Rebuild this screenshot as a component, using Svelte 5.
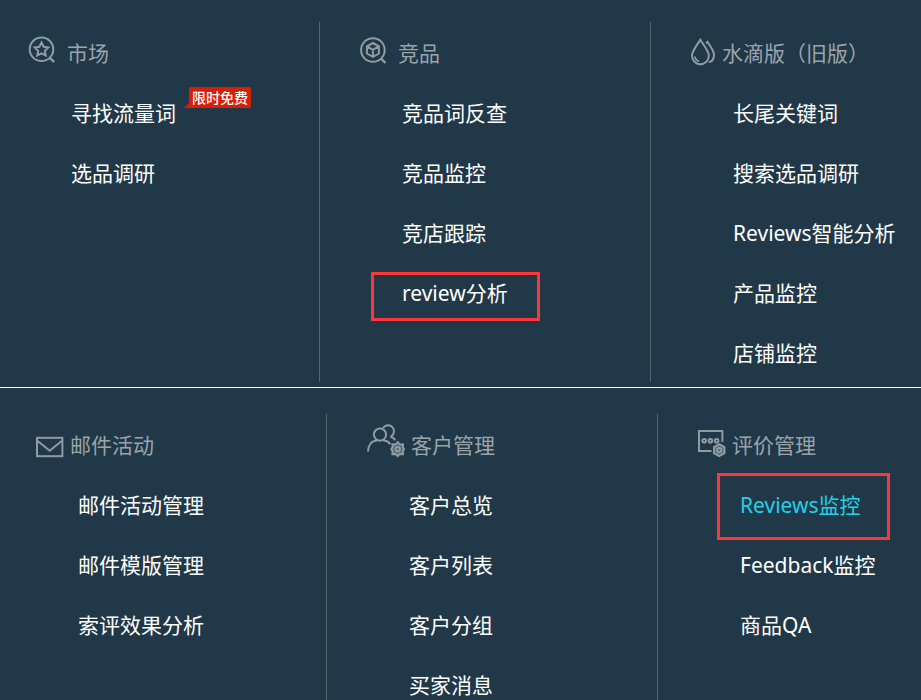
<script>
    let activeItem = $state("Reviews监控")

    const topMenu = [
        {
            title: "市场",
            icon: "market",
            iconWidth: 33,
            items: [{ name: "寻找流量词", badge: "限时免费" }, { name: "选品调研" }]
        },
        {
            title: "竞品",
            icon: "product",
            iconWidth: 33,
            items: [
                { name: "竞品词反查" },
                { name: "竞品监控" },
                { name: "竞店跟踪" },
                { name: "review分析", frame: "small" }
            ]
        },
        {
            title: "水滴版（旧版）",
            icon: "drop",
            iconWidth: 26,
            items: [
                { name: "长尾关键词" },
                { name: "搜索选品调研" },
                { name: "Reviews智能分析" },
                { name: "产品监控" },
                { name: "店铺监控" }
            ]
        }
    ]

    const bottomMenu = [
        {
            title: "邮件活动",
            icon: "mail",
            iconWidth: 29,
            items: [{ name: "邮件活动管理" }, { name: "邮件模版管理" }, { name: "索评效果分析" }]
        },
        {
            title: "客户管理",
            icon: "users",
            iconWidth: 39,
            items: [{ name: "客户总览" }, { name: "客户列表" }, { name: "客户分组" }, { name: "买家消息" }]
        },
        {
            title: "评价管理",
            icon: "comment",
            iconWidth: 29,
            items: [{ name: "Reviews监控", frame: "large" }, { name: "Feedback监控" }, { name: "商品QA" }]
        }
    ]

    function select(event, name) {
        event.preventDefault()
        activeItem = name
    }
</script>

{#snippet icon(name, width)}
    <svg {width} height="60" viewBox="0 0 {width} 60" aria-hidden="true">
        {#if name === "market"}
            <circle cx="13.5" cy="27.3" r="11.8" />
            <path d="M21.7 35.8 L26.2 40" stroke-width="2.4" />
            <path d="M13.5 20.5l2.1 4.3 4.7.7-3.4 3.3.8 4.7-4.2-2.2-4.2 2.2.8-4.7-3.4-3.3 4.7-.7z" />
        {:else if name === "product"}
            <circle cx="13.9" cy="28" r="11.8" />
            <path d="M22.2 36.8 L26.5 40.8" stroke-width="2.4" />
            <path d="M13.9 21l6 3.3v7.2l-6 3.4-6-3.4v-7.2zM7.9 24.3l6 3.5 6-3.5M13.9 27.8v7" />
        {:else if name === "drop"}
            <path d="M10.3 17.8C7.5 22.8 2 28.5 2 33.8a8.4 8.4 0 0 0 16.8 0C18.8 28.5 13 22.8 10.3 17.8z" />
            <path d="M16 21.4l1.5-1.6c2.4 4.2 6.5 8.6 6.5 13.2 0 4-2.3 6.7-5.4 7.3" />
            <path d="M5 34.5c.2 2.4 1.6 4.2 4 4.8" stroke-width="1.8" />
        {:else if name === "mail"}
            <rect x="2" y="23.8" width="25.4" height="18.4" />
            <path d="M2 26.5l12.7 10.2 12.6-10.2" />
        {:else if name === "users"}
            <circle cx="14" cy="20.6" r="6.1" />
            <path d="M17 14a6 6 0 1 1 8 8.5M24.3 22.5c2.2.6 3.8 1.8 5 3.8" />
            <path d="M2 37.5C2.2 31.4 5.3 26.7 11.2 26.5M17 26.3c3.2.3 5.6 1.6 7.3 3.8" />
            <path d="M31.7 28.2l2.1 2.2 3.2-.2-.2 3 1.3 1.9-1.3 2 .2 3-3.2-.2-2.1 2.2-2.1-2.2-3.2.2.2-3-1.3-2 1.3-1.9-.2-3 3.2.2z" class="tint" />
            <circle cx="31.7" cy="35.1" r="2.2" />
        {:else if name === "comment"}
            <path d="M25.4 28V17H2v20h12.6" />
            <circle cx="7.2" cy="26.8" r="1.8" />
            <circle cx="13.4" cy="26.8" r="1.8" />
            <circle cx="19.6" cy="26.8" r="1.8" />
            <path d="M22.2 30.2l5.2 2.9v6l-5.2 3-5.2-3v-6z" class="tint" />
            <circle cx="22.2" cy="36.1" r="2.2" />
        {/if}
    </svg>
{/snippet}

{#snippet column(group)}
    <section class="column">
        <h2>
            {@render icon(group.icon, group.iconWidth)}
            <span>{group.title}</span>
        </h2>
        <ul>
            {#each group.items as item}
                <li>
                    <a href="#menu" class:active={item.name === activeItem} onclick={(e) => select(e, item.name)}>
                        {item.name}
                        {#if item.badge}<span class="badge">{item.badge}</span>{/if}
                        {#if item.frame}<span class="frame {item.frame}"></span>{/if}
                    </a>
                </li>
            {/each}
        </ul>
    </section>
{/snippet}

<nav>
    <div class="row top">
        {#each topMenu as group}
            {@render column(group)}
        {/each}
    </div>
    <div class="row bottom">
        {#each bottomMenu as group}
            {@render column(group)}
        {/each}
    </div>
</nav>

<style>
    :global(body) {
        margin: 0;
        background-color: #213848;
    }

    nav {
        height: 100vh;
        overflow: hidden;
        background-color: #213848;
        color: #fff;
        font-family: "Noto Sans", "Noto Sans CJK SC", sans-serif;
        font-size: 21px;
        line-height: 62px;
    }

    .row {
        display: grid;
    }

    .top {
        grid-template-columns: 331fr 331fr 270fr;
        margin-left: -11px;
        padding: 22px 0 5px;
        border-bottom: 1px solid #fff;
    }

    .bottom {
        grid-template-columns: 331fr 331fr 263fr;
        margin-left: -4px;
        padding-top: 26px;
    }

    .column {
        min-width: 0;
        border-right: 1px solid #53656f;
        white-space: nowrap;
    }

    .column:last-child {
        border-right: none;
    }

    h2 {
        display: flex;
        gap: 6px;
        height: 60px;
        margin: 0;
        padding-left: 39px;
        color: #9aa4ab;
        font-size: 21px;
        font-weight: 400;
    }

    svg {
        flex: none;
        fill: none;
        stroke: #8f9ca4;
        stroke-width: 2;
    }

    .tint {
        fill: #53656f;
    }

    ul {
        margin: 0;
        padding: 0 0 0 82px;
        list-style: none;
    }

    li {
        height: 60px;
    }

    a {
        display: inline-block;
        position: relative;
        color: #fff;
        text-decoration: none;
    }

    a:hover,
    a.active {
        color: #22d0e8;
    }

    .badge {
        position: absolute;
        top: 5px;
        left: 118px;
        padding: 0 3px;
        border-radius: 2px;
        background-color: #d81e06;
        color: #fff;
        font-size: 14px;
        font-weight: 500;
        line-height: 21px;
    }

    .badge::before {
        content: "";
        position: absolute;
        bottom: 0;
        left: -5px;
        border-right: 6px solid #d81e06;
        border-top: 6px solid transparent;
    }

    .frame {
        position: absolute;
        box-sizing: border-box;
        border: 3px solid #fc3737;
        pointer-events: none;
    }

    .small {
        top: 10px;
        left: -31px;
        width: 169px;
        height: 49px;
    }

    .large {
        top: -1px;
        left: -23px;
        width: 173px;
        height: 67px;
    }
</style>
